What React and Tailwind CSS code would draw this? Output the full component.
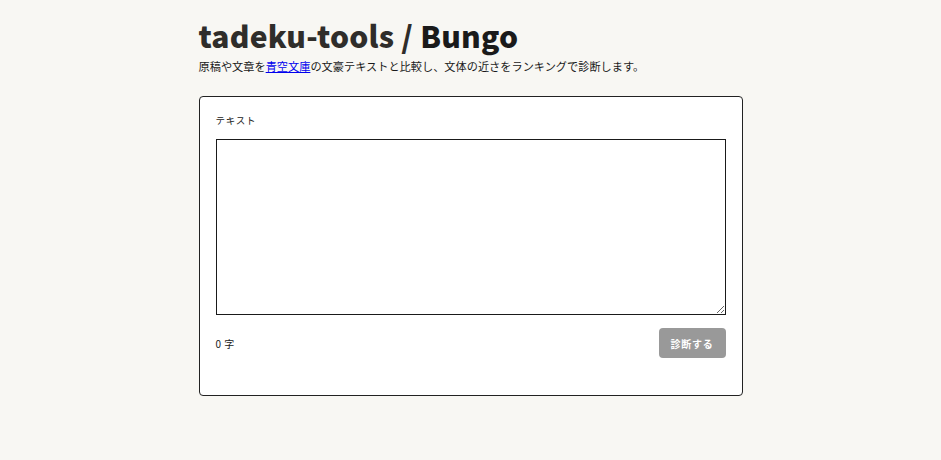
export default function App() {
  const font = { fontFamily: '"Noto Sans CJK JP", "Noto Sans", sans-serif' };
  return (
    <div className="min-h-[460px] w-full bg-[#f8f7f3]" style={font}>
      <div className="mx-auto w-[544px] pt-[13px]">
        <h1 className="text-[30px] font-black leading-[44px] tracking-[0.2px]">
          <span className="text-[#2f2d2a]">tadeku-tools / </span>
          <span className="text-[#1a1a1a]">Bungo</span>
        </h1>
        <p className="mt-[1px] text-[11.2px] leading-[16px] text-[#1a1a1a]">
          原稿や文章を
          <a href="#" className="text-[#0000ee] underline">青空文庫</a>
          の文豪テキストと比較し、文体の近さをランキングで診断します。
        </p>
        <div className="mt-[22px] rounded-[4px] border border-[#222] bg-white px-4 pb-[37px] pt-4">
          <div className="text-[9.5px] leading-[14px] tracking-[0.08em] text-[#222]">テキスト</div>
          <textarea className="mt-3 block h-[176px] w-full resize-y border border-[#1a1a1a] bg-white p-2 text-[12px] outline-none" />
          <div className="mt-[13px] flex items-center justify-between">
            <span className="text-[10px] tracking-[0.05em] text-[#222]">0 字</span>
            <button className="h-[30px] w-[67px] rounded-[4px] bg-[#999999] text-[10px] font-bold tracking-[0.08em] text-white">
              診断する
            </button>
          </div>
        </div>
      </div>
    </div>
  );
}
